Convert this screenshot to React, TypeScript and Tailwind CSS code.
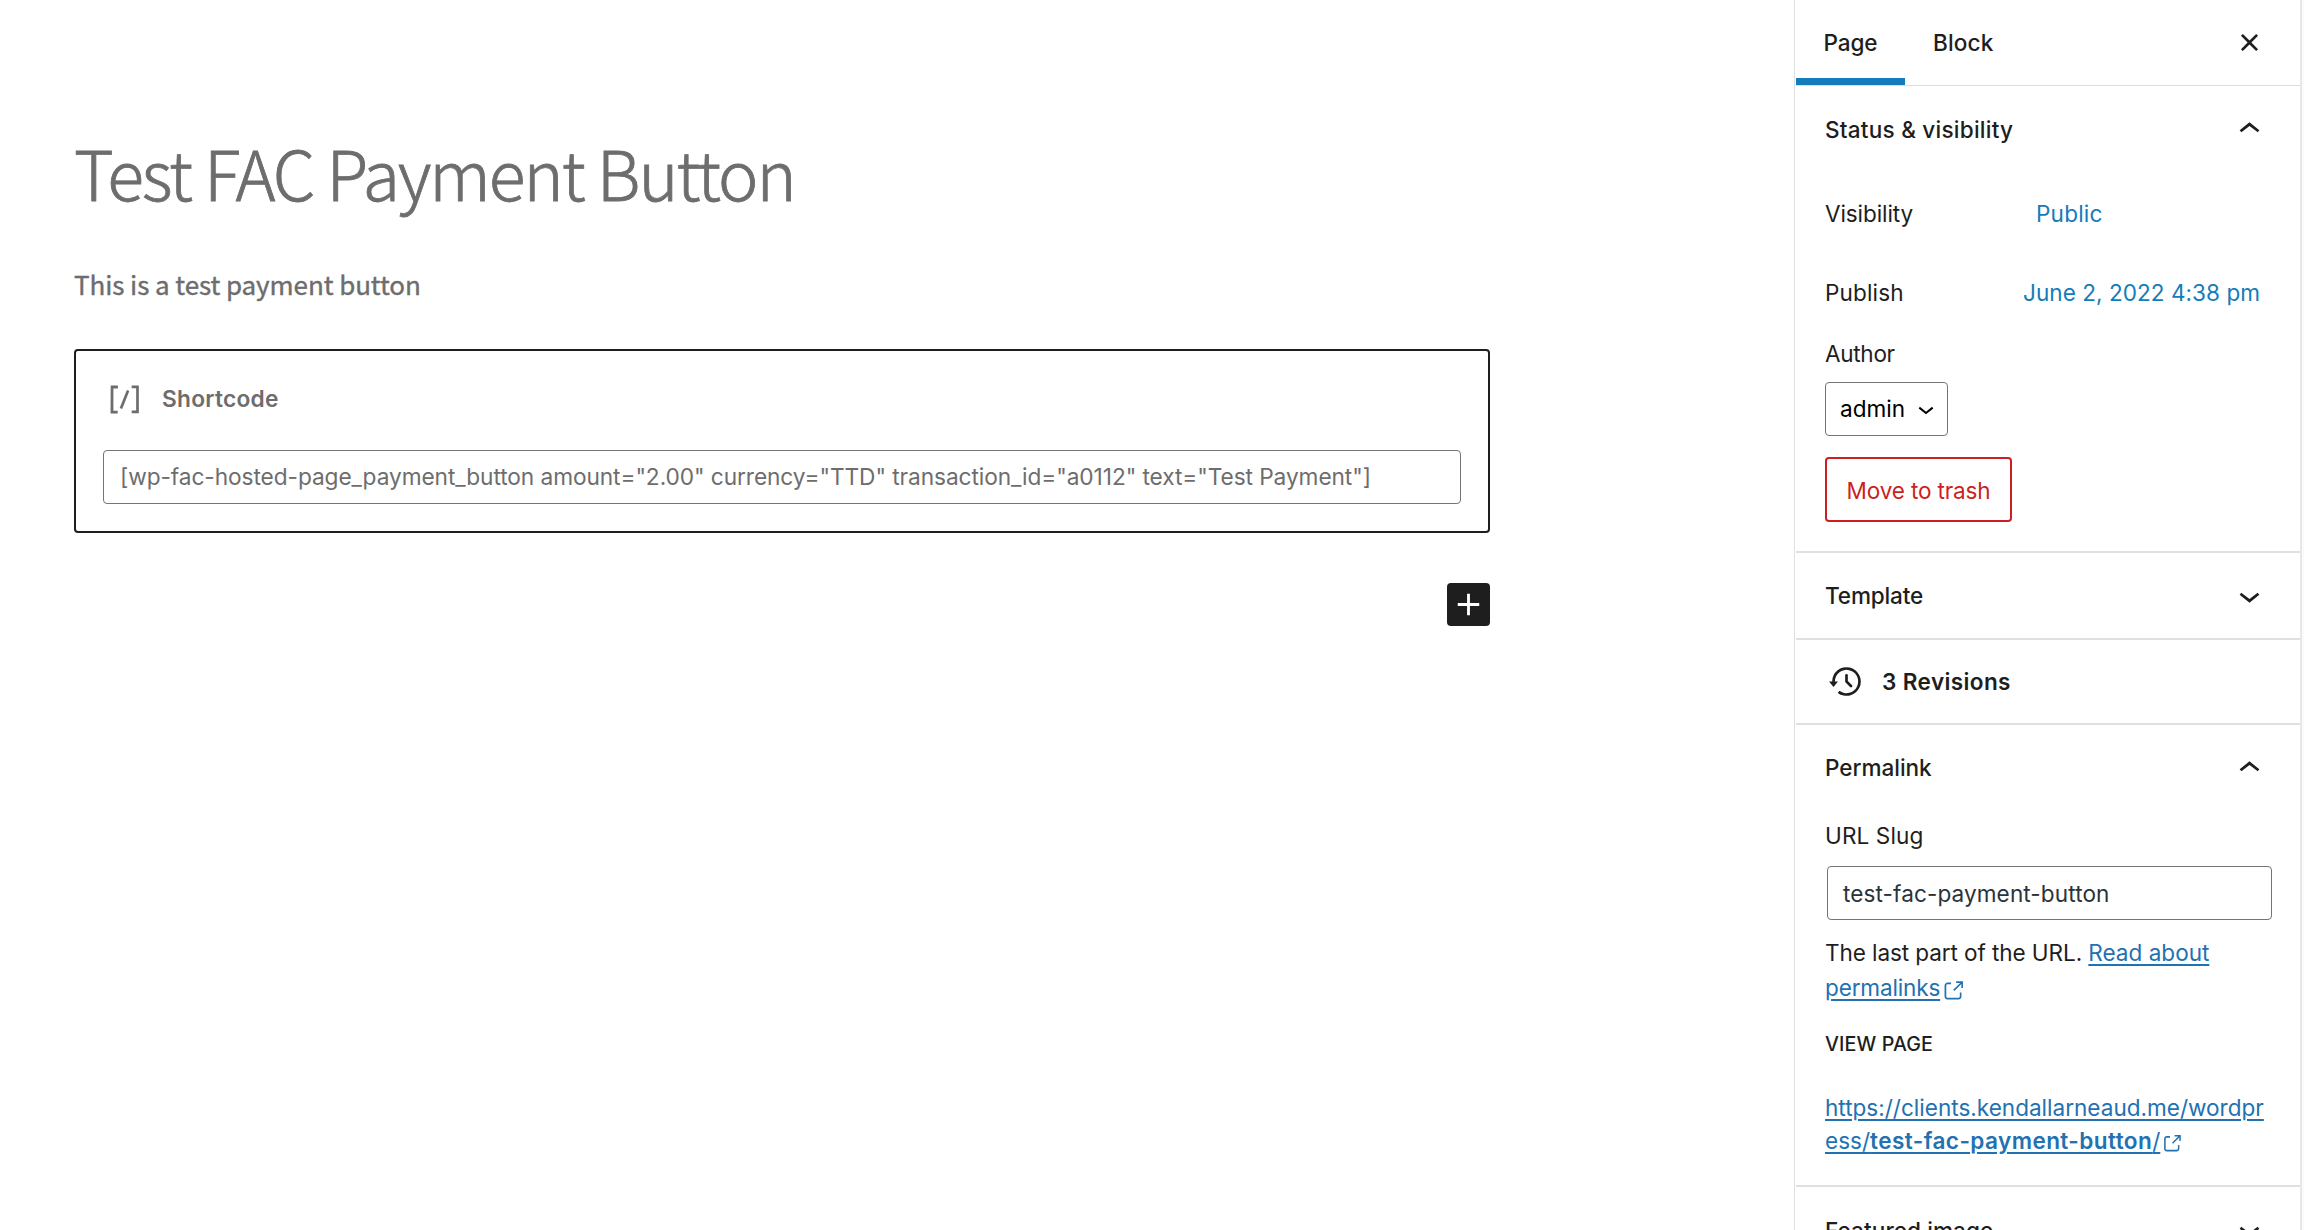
import type { ReactNode } from "react";

function Glyph({ d, className = "size-[43px]" }: { d: string; className?: string }) {
  return (
    <svg viewBox="0 0 24 24" fill="currentColor" className={`${className} shrink-0`} aria-hidden="true">
      <path d={d} />
    </svg>
  );
}

const icons = {
  shortcode:
    "M16 4.2v1.5h2.5v12.5H16v1.5h4V4.2h-4zM4.2 19.8h4v-1.5H5.8V5.8h2.5V4.2h-4l-.1 15.6zm5.1-3.1l1.4.6 4-10-1.4-.6-4 10z",
  plus: "M18 11.2h-5.2V6h-1.6v5.2H6v1.6h5.2V18h1.6v-5.2H18z",
  close:
    "M12 13.06l3.712 3.713 1.061-1.06L13.061 12l3.712-3.712-1.06-1.06L12 10.938 8.288 7.227l-1.061 1.06L10.939 12l-3.712 3.712 1.06 1.061L12 13.061z",
  up: "M6.5 12.4L12 8l5.5 4.4-.9 1.2L12 10l-4.5 3.6-1-1.2z",
  down: "M17.5 11.6L12 16l-5.5-4.4.9-1.2L12 14l4.5-3.6 1 1.2z",
  backup:
    "M5.5 12h1.75l-2.5 3-2.5-3H4a8 8 0 113.134 6.35l.907-1.194A6.5 6.5 0 105.5 12zm9.53 1.97l-2.28-2.28V8.5a.75.75 0 00-1.5 0V12a.747.747 0 00.218.529l1.282-.84-1.28.842 2.5 2.5a.75.75 0 101.06-1.061z",
  external:
    "M18.2 17c0 .7-.6 1.2-1.2 1.2H7c-.7 0-1.2-.6-1.2-1.2V7c0-.7.6-1.2 1.2-1.2h3.2V4.2H7C5.5 4.2 4.2 5.5 4.2 7v10c0 1.5 1.2 2.8 2.8 2.8h10c1.5 0 2.8-1.2 2.8-2.8v-3.6h-1.5V17zM14.9 3v1.5h3.7l-6.4 6.4 1.1 1.1 6.4-6.4v3.7h1.5V3h-6.3z",
};

function PanelTitle({ children, open = false }: { children: ReactNode; open?: boolean }) {
  return (
    <button className="flex h-[86px] w-full items-center justify-between pr-[29px] pl-[29px] text-left font-medium">
      {children}
      <Glyph d={open ? icons.up : icons.down} className={open ? "size-[43px]" : "mb-[2px] size-[43px]"} />
    </button>
  );
}

function Editor() {
  return (
    <main className="min-w-0 flex-1 pt-[138px] pl-[74px] text-[#6d6d6d]">
      <div className="flex w-[1416px] flex-col">
        <h1 className="font-['Noto_Sans_CJK_SC','Noto_Sans',sans-serif] text-[68px] leading-[68px] font-light tracking-[-1.96px] [-webkit-text-stroke:0.8px]">
          Test FAC Payment Button
        </h1>
        <p className="mt-[58px] font-['Noto_Sans_CJK_SC','Noto_Sans',sans-serif] text-[26px] leading-[40px] tracking-[-0.08px] [-webkit-text-stroke:0.4px]">
          This is a test payment button
        </p>
        <section className="mt-[45px] h-[184px] rounded-[4px] border-2 border-[#1e1e1e] px-[27px]">
          <div className="flex h-[96px] items-center gap-4 font-semibold tracking-[0.27px]">
            <Glyph d={icons.shortcode} />
            Shortcode
          </div>
          <div className="mt-[3px] flex h-[54px] items-center rounded-[4px] border border-[#757575] pl-[16px] tracking-[-0.08px] whitespace-pre">
            {'[wp-fac-hosted-page_payment_button amount="2.00" currency="TTD" transaction_id="a0112" text="Test Payment"]'}
          </div>
        </section>
        <button className="mt-[50px] size-[43px] self-end rounded-[4px] bg-[#1e1e1e] text-white">
          <Glyph d={icons.plus} />
        </button>
      </div>
    </main>
  );
}

function Sidebar() {
  return (
    <aside className="flex w-[508px] shrink-0 flex-col overflow-hidden border-r-2 border-l border-r-[#e8e8e8] border-l-[#e0e0e0] pl-px text-[22.56px] text-[#1e1e1e] *:shrink-0">
      <header className="flex h-[86px] border-b border-[#dddddd] pr-[29px] font-medium">
        <button className="h-[85px] w-[109px] border-b-[7px] border-[#147cba] pt-[7px] tracking-[-0.13px]">Page</button>
        <button className="h-[85px] px-7 tracking-[0.15px]">Block</button>
        <button className="ml-auto">
          <Glyph d={icons.close} />
        </button>
      </header>

      <section className="border-b-2 border-[#e0e0e0] pb-[29px]">
        <PanelTitle open>
          <span className="pt-[2px] tracking-[0.23px]">Status &amp; visibility</span>
        </PanelTitle>
        <div className="px-[29px]">
          <div className="mt-[9px] flex h-[65px] items-center">
            <span className="w-[211px] tracking-[-0.1px]">Visibility</span>
            <a className="tracking-[0.2px] text-[#147cba]">Public</a>
          </div>
          <div className="mt-[14px] flex h-[65px] items-center">
            <span className="w-[198px] tracking-[0.15px]">Publish</span>
            <a className="tracking-[0.04px] whitespace-nowrap text-[#147cba]">June 2, 2022 4:38 pm</a>
          </div>
          <div className="mt-[15px] leading-[28px] tracking-[-0.3px]">Author</div>
          <button className="mt-[14px] flex h-[54px] w-[123px] items-center justify-between rounded-[4px] border border-[#757575] pr-[5px] pl-[14px] text-black">
            admin
            <Glyph d={icons.down} className="size-8" />
          </button>
          <button className="mt-[21px] flex h-[65px] w-[187px] items-center justify-center rounded-[4px] border-2 border-[#cc1f24] pt-[2px] tracking-[-0.16px] text-[#cc1f24]">
            Move to trash
          </button>
        </div>
      </section>

      <section className="h-[87px] border-b-2 border-[#e0e0e0]">
        <PanelTitle>
          <span className="tracking-[-0.15px]">Template</span>
        </PanelTitle>
      </section>

      <section className="flex h-[85px] items-center gap-[14px] border-b-2 border-[#e0e0e0] pl-[29px] font-semibold tracking-[0.38px]">
        <Glyph d={icons.backup} />
        3 Revisions
      </section>

      <section className="border-b-2 border-[#e0e0e0] pb-[28px]">
        <PanelTitle open>
          <span className="tracking-[-0.03px]">Permalink</span>
        </PanelTitle>
        <div className="pr-[28px] pl-[29px]">
          <div className="mt-[11px] leading-[28px] tracking-[0.12px]">URL Slug</div>
          <div className="mt-[16px] ml-[2px] flex h-[54px] items-center rounded-[4px] border border-[#757575] pt-px pl-[15px] tracking-[0.11px] text-[#2c3338]">
            test-fac-payment-button
          </div>
          <p className="mt-[15px] leading-[35px] tracking-[-0.09px]">
            The last part of the URL.{" "}
            <a className="text-[#2271b1]">
              <span className="tracking-normal underline decoration-2 underline-offset-[3px]">
                Read about
                <br />
              </span>
              <span className="tracking-[-0.16px] underline decoration-2 underline-offset-[3px]">permalinks</span>
              <Glyph d={icons.external} className="inline-block size-[26px] align-[-8px]" />
            </a>
          </p>
          <h3 className="mt-[27px] text-[19.7px] leading-[24px] font-medium tracking-[0.1px]">VIEW PAGE</h3>
          <p className="mt-[35px] leading-[33px] whitespace-nowrap text-[#2271b1]">
            <span className="underline decoration-2 underline-offset-[3px]">
              https://clients.kendallarneaud.me/wordpr
              <br />
              ess/<span className="font-semibold tracking-[0.42px]">test-fac-payment-button</span>/
            </span>
            <Glyph d={icons.external} className="inline-block size-[23.5px] align-[-6px]" />
          </p>
        </div>
      </section>

      <section>
        <PanelTitle>
          <span className="pt-[2px] tracking-[0.08px]">Featured image</span>
        </PanelTitle>
      </section>
    </aside>
  );
}

export default function App() {
  return (
    <div className="flex h-[1230px] w-[2304px] overflow-hidden bg-white font-[Inter,sans-serif] text-[22.7px] leading-[28px]">
      <Editor />
      <Sidebar />
      <div className="w-[2px] shrink-0 bg-[#fafafa]" />
    </div>
  );
}
